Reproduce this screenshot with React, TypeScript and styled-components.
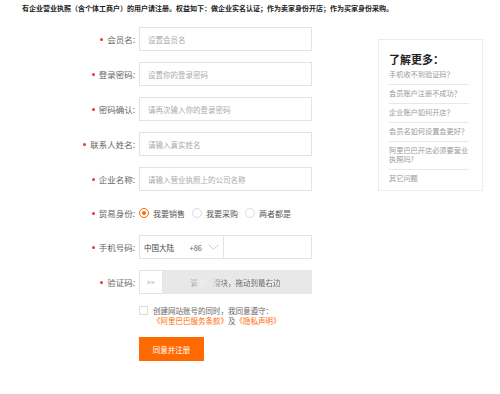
import React from "react";
import styled, { createGlobalStyle } from "styled-components";

const GlobalStyle = createGlobalStyle`
    body {
        margin: 0;
        background: #fff;
        font-family: "Noto Sans CJK SC", "Liberation Sans", sans-serif;
        color: #333;
    }
`;

const Page = styled.div`
    width: 500px;
    height: 394px;
    overflow: hidden;
    position: relative;
`;

const Notice = styled.p`
    margin: 0;
    padding: 3px 0 0 22px;
    height: 13px;
    font-size: 7px;
    line-height: 11px;
    font-weight: 700;
    color: #222;
    white-space: nowrap;
`;

const Content = styled.div`
    display: flex;
    align-items: flex-start;
    padding-top: 11px;
`;

const Form = styled.form`
    width: 312px;
    display: flex;
    flex-direction: column;
    gap: 11px;
`;

const Row = styled.div<{ $h?: number }>`
    display: grid;
    grid-template-columns: 135px 173px;
    column-gap: 4px;
    align-items: center;
    height: ${(p) => p.$h ?? 24}px;
`;

const Label = styled.label`
    display: flex;
    align-items: center;
    justify-content: flex-end;
    font-size: 8.5px;
    color: #666;
    white-space: nowrap;
`;

const Required = styled.span`
    width: 3px;
    height: 3px;
    border-radius: 50%;
    background: #e4393c;
    margin-right: 4px;
`;

const Input = styled.input`
    box-sizing: border-box;
    width: 173px;
    height: 24px;
    border: 1px solid #e3e3e3;
    padding: 0 8px;
    font-family: inherit;
    font-size: 7.5px;
    color: #333;
    outline: none;
    &::placeholder {
        color: #aaa;
    }
`;

const RadioGroup = styled.div`
    display: flex;
    align-items: center;
    gap: 5px;
`;

const RadioItem = styled.label`
    display: flex;
    align-items: center;
    gap: 4px;
    font-size: 8px;
    color: #555;
    margin-right: 2px;
`;

const RadioDot = styled.span<{ $on?: boolean }>`
    box-sizing: border-box;
    width: 10px;
    height: 10px;
    border-radius: 50%;
    border: 1px solid ${(p) => (p.$on ? "#ff6a00" : "#ddd")};
    display: flex;
    align-items: center;
    justify-content: center;
    &::after {
        content: "";
        width: 4px;
        height: 4px;
        border-radius: 50%;
        background: ${(p) => (p.$on ? "#ff6a00" : "transparent")};
    }
`;

const PhoneBox = styled.div`
    box-sizing: border-box;
    width: 173px;
    height: 24px;
    border: 1px solid #e3e3e3;
    display: flex;
`;

const Country = styled.div`
    width: 84px;
    border-right: 1px solid #e3e3e3;
    display: flex;
    align-items: center;
    padding: 0 4px;
    box-sizing: border-box;
    font-size: 7.5px;
    color: #444;
`;

const CountryName = styled.span`
    flex: 1;
`;

const Code = styled.span`
    margin-right: 6px;
    color: #666;
`;

const Slider = styled.div`
    width: 173px;
    height: 24px;
    background: #e8e8e8;
    display: flex;
    align-items: center;
`;

const Handle = styled.div`
    box-sizing: border-box;
    width: 24px;
    height: 24px;
    background: #fff;
    border: 1px solid #e3e3e3;
    display: flex;
    align-items: center;
    justify-content: center;
    font-size: 7px;
    color: #aaa;
`;

const SlideHint = styled.span`
    flex: 1;
    text-align: center;
    font-size: 7.5px;
    padding-right: 4px;
    background: linear-gradient(90deg, #666 0%, #666 17%, #f4f4f4 25%, #e8e8e8 32%, #888 38%, #666 42%, #666 100%);
    -webkit-background-clip: text;
    background-clip: text;
    color: transparent;
`;

const Agree = styled.div`
    margin-left: 139px;
    display: flex;
    align-items: flex-start;
    gap: 5px;
`;

const Check = styled.span`
    box-sizing: border-box;
    width: 9px;
    height: 9px;
    border: 1px solid #ddd;
    flex-shrink: 0;
    margin-top: 1px;
`;

const AgreeText = styled.div`
    font-size: 7.5px;
    line-height: 10px;
    color: #666;
    padding-top: 1px;
`;

const Terms = styled.a`
    color: #ff6a00;
    text-decoration: none;
`;

const Submit = styled.button`
    margin-left: 139px;
    width: 65px;
    height: 24px;
    border: none;
    background: #ff6a00;
    color: #fff;
    font-family: inherit;
    font-size: 7.5px;
    padding: 0;
`;

const Aside = styled.aside`
    box-sizing: border-box;
    width: 105px;
    margin-left: 66px;
    margin-top: 12px;
    border: 1px solid #ececec;
    padding: 13px 13px 2px 10px;
`;

const AsideTitle = styled.h3`
    margin: 0 0 1px;
    font-size: 11px;
    line-height: 12px;
    font-weight: 700;
    color: #222;
`;

const QList = styled.ul`
    list-style: none;
    margin: 0;
    padding: 0;
`;

const QItem = styled.li`
    padding: 4px 0 5px;
    font-size: 7.2px;
    line-height: 9px;
    color: #999;
    border-bottom: 1px solid #e8e8e8;
    &:last-child {
        border-bottom: none;
    }
`;

const questions = [
    "手机收不到验证码？",
    "会员账户注册不成功？",
    "企业账户如何开店？",
    "会员名如何设置会更好？",
    "阿里巴巴开店必须要营业执照吗?",
    "其它问题",
];

const fields = [
    { label: "会员名:", placeholder: "设置会员名" },
    { label: "登录密码:", placeholder: "设置你的登录密码" },
    { label: "密码确认:", placeholder: "请再次输入你的登录密码" },
    { label: "联系人姓名:", placeholder: "请输入真实姓名" },
    { label: "企业名称:", placeholder: "请输入营业执照上的公司名称" },
];

function Chevron() {
    return (
        <svg width="11" height="7" viewBox="0 0 11 7">
            <polyline points="0.5,0.5 5.5,5.5 10.5,0.5" fill="none" stroke="#c8c8c8" strokeWidth="0.9" />
        </svg>
    );
}

export default function App() {
    return (
        <Page>
            <GlobalStyle />
            <Notice>有企业营业执照（含个体工商户）的用户请注册。权益如下：做企业实名认证；作为卖家身份开店；作为买家身份采购。</Notice>
            <Content>
                <Form onSubmit={(e) => e.preventDefault()}>
                    {fields.map((f) => (
                        <Row key={f.label}>
                            <Label>
                                <Required />
                                {f.label}
                            </Label>
                            <Input placeholder={f.placeholder} />
                        </Row>
                    ))}
                    <Row $h={22}>
                        <Label>
                            <Required />
                            贸易身份:
                        </Label>
                        <RadioGroup>
                            <RadioItem>
                                <RadioDot $on />
                                我要销售
                            </RadioItem>
                            <RadioItem>
                                <RadioDot />
                                我要采购
                            </RadioItem>
                            <RadioItem>
                                <RadioDot />
                                两者都是
                            </RadioItem>
                        </RadioGroup>
                    </Row>
                    <Row>
                        <Label>
                            <Required />
                            手机号码:
                        </Label>
                        <PhoneBox>
                            <Country>
                                <CountryName>中国大陆</CountryName>
                                <Code>+86</Code>
                                <Chevron />
                            </Country>
                        </PhoneBox>
                    </Row>
                    <Row>
                        <Label>
                            <Required />
                            验证码:
                        </Label>
                        <Slider>
                            <Handle>&gt;&gt;</Handle>
                            <SlideHint>请按住滑块，拖动到最右边</SlideHint>
                        </Slider>
                    </Row>
                    <Agree>
                        <Check />
                        <AgreeText>
                            创建网站账号的同时，我同意遵守：
                            <br />
                            <Terms href="#">《阿里巴巴服务条款》</Terms>及<Terms href="#">《隐私声明》</Terms>
                        </AgreeText>
                    </Agree>
                    <Submit type="submit">同意并注册</Submit>
                </Form>
                <Aside>
                    <AsideTitle>了解更多：</AsideTitle>
                    <QList>
                        {questions.map((q) => (
                            <QItem key={q}>{q}</QItem>
                        ))}
                    </QList>
                </Aside>
            </Content>
        </Page>
    );
}
